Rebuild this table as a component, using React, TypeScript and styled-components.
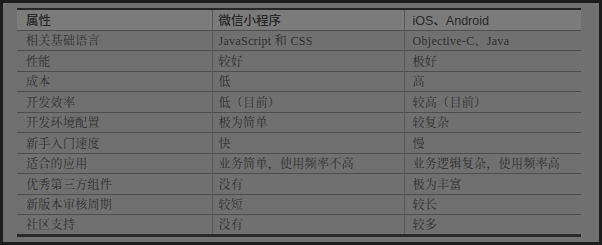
import React from "react";
import styled, { createGlobalStyle } from "styled-components";

const GlobalStyle = createGlobalStyle`
  html, body {
    margin: 0;
    padding: 0;
    background: #1d1d1d;
  }
`;

const Page = styled.div`
  width: 602px;
  height: 245px;
  box-sizing: border-box;
  padding: 3px 3px 3px 3px;
  background: #1d1d1d;
`;

const Panel = styled.div`
  height: 100%;
  background: #707070;
  padding: 5px 18px 0 14px;
  box-sizing: border-box;
`;

const Table = styled.table`
  width: 564px;
  border-collapse: collapse;
  table-layout: fixed;
  border-top: 2px solid #262626;
  border-bottom: 3px solid #2a2a2a;
`;

const Col = styled.col<{ $w: number }>`
  width: ${(p) => p.$w}px;
`;

const HeadRow = styled.tr`
  background: #7b7b7b;
  height: 21px;
`;

const Row = styled.tr`
  height: 20.5px;
  border-top: 1px solid #4e4e4e;
`;

const Th = styled.th<{ $pad: number }>`
  box-sizing: border-box;
  padding: 0 0 0 ${(p) => p.$pad}px;
  text-align: left;
  font-family: "Liberation Sans", "Noto Sans CJK SC", sans-serif;
  font-size: 12.5px;
  font-weight: 500;
  color: #282828;
  border-left: 1px solid #595959;
  &:first-child {
    border-left: none;
  }
`;

const Td = styled.td<{ $pad: number }>`
  box-sizing: border-box;
  padding: 0 0 0 ${(p) => p.$pad}px;
  font-family: "Liberation Serif", "Noto Serif CJK SC", "Noto Sans CJK SC", serif;
  font-size: 12px;
  letter-spacing: 0.3px;
  color: #303030;
  white-space: nowrap;
  border-left: 1px solid #595959;
  &:first-child {
    border-left: none;
  }
`;

const cols = [
  { title: "属性", w: 195, pad: 9 },
  { title: "微信小程序", w: 192, pad: 6 },
  { title: "iOS、Android", w: 177, pad: 8 },
];

const rows: string[][] = [
  ["相关基础语言", "JavaScript 和 CSS", "Objective-C、Java"],
  ["性能", "较好", "极好"],
  ["成本", "低", "高"],
  ["开发效率", "低（目前）", "较高（目前）"],
  ["开发环境配置", "极为简单", "较复杂"],
  ["新手入门速度", "快", "慢"],
  ["适合的应用", "业务简单，使用频率不高", "业务逻辑复杂，使用频率高"],
  ["优秀第三方组件", "没有", "极为丰富"],
  ["新版本审核周期", "较短", "较长"],
  ["社区支持", "没有", "较多"],
];

const App = () => {
  return (
    <>
      <GlobalStyle />
      <Page>
        <Panel>
          <Table>
            <colgroup>
              {cols.map((c) => (
                <Col key={c.title} $w={c.w} />
              ))}
            </colgroup>
            <thead>
              <HeadRow>
                {cols.map((c) => (
                  <Th key={c.title} $pad={c.pad}>
                    {c.title}
                  </Th>
                ))}
              </HeadRow>
            </thead>
            <tbody>
              {rows.map((r) => (
                <Row key={r[0]}>
                  {r.map((cell, i) => (
                    <Td key={i} $pad={cols[i].pad}>
                      {cell}
                    </Td>
                  ))}
                </Row>
              ))}
            </tbody>
          </Table>
        </Panel>
      </Page>
    </>
  );
};

export default App;
